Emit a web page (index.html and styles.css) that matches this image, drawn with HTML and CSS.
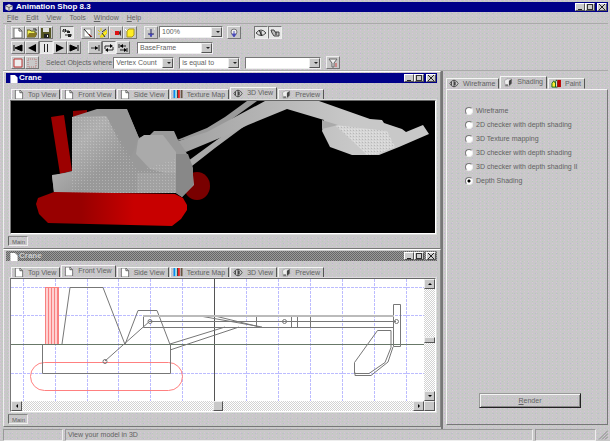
FILE: index.html
```html
<!DOCTYPE html>
<html lang="en">
<head>
<meta charset="utf-8">
<title>Animation Shop 8.3</title>
<link rel="stylesheet" href="styles.css">
</head>
<body>
<svg class="defs" aria-hidden="true">
  <symbol id="page" viewBox="0 0 10 10"><path d="M1 0h5l3 3v7H1z" fill="#fff" stroke="#555" stroke-width=".8"/><path d="M6 0v3h3" fill="none" stroke="#555"/></symbol>
  <symbol id="texture" viewBox="0 0 10 10"><path d="M0 0h2v9H0z" fill="#1188ee"/><path d="M2 0h1v9H2z" fill="#6ef"/><path d="M4 0h1v9H4z" fill="#333"/><path d="M5 0h2v9H5z" fill="#e22"/><path d="M8 0h2v9H8z" fill="#654"/></symbol>
  <symbol id="eye" viewBox="0 0 12 10"><path d="M1 5q2-4 5-4t5 4q-2 4-5 4T1 5z" fill="#ccc" stroke="#444"/><path d="M6 1v8M3 3v4" stroke="#333"/><path d="M6 3h2v4H6z" fill="#444"/></symbol>
  <symbol id="cube" viewBox="0 0 10 10"><path d="M1 3l3-2h5v5L7 9H2z" fill="#eee" stroke="#999" stroke-width=".7"/><path d="M6 3l3-2v5L6 9z" fill="#444"/><path d="M2 7h3v2H2z" fill="#777"/></symbol>
  <symbol id="paint" viewBox="0 0 11 10"><path d="M1 9V5l2-3 2 3v4z" fill="#fe3" stroke="#161"/><path d="M5 9V3l1-2 1 2v6z" fill="#fff" stroke="#151"/><path d="M7 1h4v8H7z" fill="#b00"/></symbol>
  <symbol id="tree" viewBox="0 0 10 10"><path d="M0 3h7M3 7h7" stroke="#222"/><path d="M3 1L1 3l2 2zM1 1h3v3H1zM5 3h3v2H5zM6 6h3v3H6z" fill="#222"/></symbol>
</svg>
<div class="app">
  <header class="title main-title">
    <svg class="ico" viewBox="0 0 10 10"><path d="M1 3l4-2 4 2v4L5 9 1 7z" fill="#ddd"/><path d="M5 5v4M1 3l4 2 4-2" fill="none" stroke="#555"/></svg>
    <h1>Animation Shop 8.3</h1>
    <div class="winbtns"><button class="wb min" aria-label="Minimize"></button><button class="wb max" aria-label="Restore"></button><button class="wb close" aria-label="Close"></button></div>
  </header>
  <nav class="menu"><a href="#"><u>F</u>ile</a><a href="#"><u>E</u>dit</a><a href="#"><u>V</u>iew</a><a href="#">Tools</a><a href="#"><u>W</u>indow</a><a href="#"><u>H</u>elp</a></nav>

  <div class="toolbars">
    <div class="bar">
      <div class="group">
        <button class="tb" aria-label="New"><svg viewBox="0 0 10 10"><use href="#page"/></svg></button>
        <button class="tb" aria-label="Open"><svg viewBox="0 0 10 10"><path d="M0 9V2h3l1 1h4v2h2L8 9z" fill="#ee5" stroke="#552"/><path d="M0 9l2-4h8L8 9z" fill="#872"/><path d="M6 1h3v2" fill="none" stroke="#222"/></svg></button>
        <button class="tb" aria-label="Save"><svg viewBox="0 0 10 10"><path d="M0 0h10v10H0z" fill="#552"/><path d="M2 0h6v4H2z" fill="#ddd"/><path d="M3 6h5v4H3z" fill="#222"/><path d="M6 7h1v2H6z" fill="#eee"/></svg></button>
      </div>
      <div class="group"><button class="tb on" aria-label="Hierarchy"><svg viewBox="0 0 10 10"><use href="#tree"/></svg></button></div>
      <div class="group">
        <button class="tb" aria-label="Sheet"><svg viewBox="0 0 10 10"><path d="M1 1h7v8H1z" fill="#fff" stroke="#999"/><path d="M1 1l7 8" stroke="#222"/><path d="M6 6l3 3" stroke="#a22"/></svg></button>
        <button class="tb" aria-label="Light"><svg viewBox="0 0 10 10"><path d="M1 2l2 2M4 0v3M1 6h2M3 9l3-4 4-3v3L6 9z" fill="#fe2" stroke="#dc1"/><path d="M5 4l4-3M5 5l3 4" stroke="#333"/></svg></button>
        <button class="tb" aria-label="Camera"><svg viewBox="0 0 10 10"><path d="M0 1l3 3M0 6h3" stroke="#fbb"/><path d="M4 3h4v4H4z" fill="#d11"/><path d="M8 4l2-2v6L8 6z" fill="#433"/></svg></button>
        <button class="tb" aria-label="Shape"><svg viewBox="0 0 10 10"><path d="M2 3l2-2h5v6L7 9H2z" fill="#fe2" stroke="#a92"/><path d="M0 1l2 2" stroke="#fff"/></svg></button>
      </div>
      <div class="group">
        <button class="tb" aria-label="Zoom in"><svg viewBox="0 0 10 10"><path d="M5 1v8M2 6h6" stroke="#226"/><path d="M1 1h2M8 1h1" stroke="#fff"/><path d="M3 6l2 3 2-3z" fill="#44b"/></svg></button>
        <span class="combo zoom"><select aria-label="Zoom"><option>100%</option></select></span>
        <button class="tb apart" aria-label="Zoom fit"><svg viewBox="0 0 10 10"><circle cx="5" cy="4" r="3" fill="#eee" stroke="#777"/><path d="M5 3v4M3 6l2 3 2-3z" fill="#33a" stroke="#55b"/></svg></button>
      </div>
      <div class="group far">
        <button class="tb on" aria-label="Show"><svg viewBox="0 0 10 10"><path d="M0 5q5-6 10 0-5 5-10 0z" fill="#ddd" stroke="#444"/><path d="M5 3v4M3 2l3 6" stroke="#222"/></svg></button>
        <button class="tb on" aria-label="Hide"><svg viewBox="0 0 10 10"><path d="M1 2h3l1 2h4v4H4L2 5z" fill="#bbb" stroke="#444"/><path d="M6 4v3" stroke="#222"/></svg></button>
      </div>
    </div>
    <div class="bar">
      <div class="group">
        <button class="tb" aria-label="First frame"><svg viewBox="0 0 10 10"><path d="M1 2v6M9 2v6L2 5z" fill="#000" stroke="#000"/></svg></button>
        <button class="tb" aria-label="Back"><svg viewBox="0 0 10 10"><path d="M9 1v8L1 5z"/></svg></button>
        <button class="tb on" aria-label="Pause"><svg viewBox="0 0 10 10" shape-rendering="crispEdges"><path d="M3 1h1v8H3zM6 1h1v8H6z" fill="#222"/></svg></button>
        <button class="tb" aria-label="Play"><svg viewBox="0 0 10 10"><path d="M1 1v8l8-4z"/></svg></button>
        <button class="tb" aria-label="Last frame"><svg viewBox="0 0 10 10"><path d="M9 2v6M1 2v6l7-3z" fill="#000" stroke="#000"/></svg></button>
      </div>
      <div class="group">
        <button class="tb" aria-label="Once"><svg viewBox="0 0 10 10"><path d="M1 5h7M9 2v6" stroke="#333"/><path d="M5 3l3 2-3 2z"/></svg></button>
        <button class="tb on" aria-label="Loop"><svg viewBox="0 0 10 10"><path d="M1 6V3h6M9 4v3H3" fill="none" stroke="#222"/><path d="M6 1l3 2-3 2zM4 5L1 7l3 2z"/></svg></button>
        <button class="tb" aria-label="Bounce"><svg viewBox="0 0 10 10"><path d="M1 1v4M2 3h6M2 7h6M9 5v4" stroke="#222"/><path d="M5 1L2 3l3 2zM6 5l3 2-3 2z"/></svg></button>
      </div>
      <span class="combo frame"><select aria-label="Frame"><option>BaseFrame</option></select></span>
    </div>
    <div class="bar">
      <div class="group">
        <button class="tb" aria-label="Select"><svg viewBox="0 0 10 10"><path d="M1 1h8v8H1z" fill="#eee" stroke="#b33"/></svg></button>
        <button class="tb" aria-label="Deselect"><svg viewBox="0 0 10 10"><path d="M1 1h8v8H1z" fill="none" stroke="#b77" stroke-dasharray="1 1"/></svg></button>
      </div>
      <label class="query" for="field">Select Objects where</label>
      <div class="filters">
        <span class="combo short"><select id="field"><option>Vertex Count</option></select></span>
        <span class="combo short"><select aria-label="Comparison"><option>is equal to</option></select></span>
        <span class="combo frame"><select aria-label="Value"><option></option></select></span>
        <button class="tb" aria-label="Apply filter"><svg viewBox="0 0 10 10"><path d="M1 1h8L6 5v4H4V5z" fill="#eee" stroke="#666"/><path d="M7 5h2v4H7z" fill="#c88"/></svg></button>
      </div>
    </div>
  </div>

  <div class="work">
    <main class="mdi">
      <section class="win">
        <div class="title">
          <svg class="ico" viewBox="0 0 10 10"><path d="M1 1h5l3 3v6H1z" fill="#fff"/></svg><h2>Crane</h2>
          <div class="winbtns"><button class="wb min" aria-label="Minimize"></button><button class="wb max" aria-label="Maximize"></button><button class="wb close" aria-label="Close"></button></div>
        </div>
        <div class="tabs">
          <button class="tab"><svg class="ico"><use href="#page"/></svg>Top View</button><button class="tab"><svg class="ico"><use href="#page"/></svg>Front View</button><button class="tab"><svg class="ico"><use href="#page"/></svg>Side View</button><button class="tab"><svg class="ico"><use href="#texture"/></svg>Texture Map</button><button class="tab active"><svg class="ico"><use href="#eye"/></svg>3D View</button><button class="tab"><svg class="ico"><use href="#cube"/></svg>Preview</button>
        </div>
        <div class="view dark">
          <svg class="scene" viewBox="11 101 424 132" preserveAspectRatio="xMidYMid slice" role="img" aria-label="Shaded crane">
            <defs>
              <linearGradient id="red"><stop offset=".3" stop-color="#980000"/><stop offset=".65" stop-color="#c80000"/></linearGradient>
              <linearGradient id="boom"><stop offset="0" stop-color="#a0a0a0"/><stop offset=".7" stop-color="#c8c8c8"/></linearGradient>
              <linearGradient id="cab" x2="1" y2="1"><stop offset="0" stop-color="#a2a2a2"/><stop offset=".35" stop-color="#b0b0b0"/><stop offset=".65" stop-color="#999"/></linearGradient>
              <pattern id="grain" width="3" height="3" patternUnits="userSpaceOnUse"><path d="M0 0h1v1H0z" fill="#eee"/><path d="M2 1h1v1H2z" fill="#999"/></pattern>
            </defs>
            <ellipse cx="197" cy="186" rx="13" ry="14" fill="#790000"/>
            <path d="M51 117l13-2 8 56-12 3z" fill="#9c0000"/>
            <path d="M73 111l14-1v4l-14 3z" fill="#8a0000"/>
            <path d="M188 161l37-27 25-15-4 6-31 23-23 18z" fill="#aaa"/>
            <path d="M172 142l35-14 18-11 22-16h10l-25 18-22 15z" fill="#999"/>
            <path d="M172 143l35-11 58-31h54l51 18 12 1 2 3 18 6 4 3 17-7 6 9-30 13-20 8h-27l-22-8-8-16 2-11-37-11-39 16-21 10-41 17z" fill="url(#boom)"/>
            <path d="M335 125l52 6 8 16-18 7-10 1z" fill="#d5d5d5"/>
            <path d="M335 125l52 6 8 16-18 7-10 1z" fill="url(#grain)" opacity=".5"/>
            <path d="M322 120l16 5-16 4z" fill="#aaa"/>
            <path d="M72 117l25-8 30 1 12 28 4-2 7-1 4-4h20l4 9 8 12 6 13 2 20-12 12-6-4H54l-2-17 20-5z" fill="#999"/>
            <path d="M72 117l35-1 22 45 8 31H54l-2-17 20-3z" fill="url(#cab)"/>
            <path d="M97 109h30l12 29-10 23-22-44z" fill="#979797"/>
            <path d="M138 140l6-5h19l13 17v24l-26-7-14-15z" fill="#aaa"/>
            <path d="M137 173h39v20h-39z" fill="#a2a2a2"/>
            <path d="M176 154h12l5 14v17l-11 12-6-4z" fill="#888"/>
            <path d="M72 117l35-1 31 55 38-12v34H72z" fill="url(#grain)" opacity=".28"/>
            <path d="M54 192l121 2 8 4 4 7v5l-6 9-9 7-124-3-9-9-3-10 2-6z" fill="url(#red)"/>
          </svg>
        </div>
        <div class="foot"><span class="chip">Main</span></div>
      </section>

      <section class="win idle">
        <div class="title">
          <svg class="ico" viewBox="0 0 10 10"><path d="M1 1h5l3 3v6H1z" fill="#fff"/></svg><h2>Crane</h2>
          <div class="winbtns"><button class="wb min" aria-label="Minimize"></button><button class="wb max" aria-label="Maximize"></button><button class="wb close" aria-label="Close"></button></div>
        </div>
        <div class="tabs">
          <button class="tab"><svg class="ico"><use href="#page"/></svg>Top View</button><button class="tab active"><svg class="ico"><use href="#page"/></svg>Front View</button><button class="tab"><svg class="ico"><use href="#page"/></svg>Side View</button><button class="tab"><svg class="ico"><use href="#texture"/></svg>Texture Map</button><button class="tab"><svg class="ico"><use href="#eye"/></svg>3D View</button><button class="tab"><svg class="ico"><use href="#cube"/></svg>Preview</button>
        </div>
        <div class="view scrolled">
          <svg class="scene" viewBox="11 279 413 122" preserveAspectRatio="xMidYMid slice" role="img" aria-label="Front wireframe" shape-rendering="crispEdges" fill="none">
            <path d="M23.5 279v122M55.5 279v122M87.500 279v122M118.500 279v122M150.500 279v122M182.500 279v122M246.500 279v122M278.500 279v122M310.500 279v122M342.500 279v122M374.500 279v122M406.500 279v122M11 287.500h413M11 315.500h413M11 373.500h413" stroke="#bcbcff" stroke-dasharray="3 1"/>
            <path d="M214.500 279v122" stroke="#555"/>
            <path d="M11 344.500h413" stroke="#687868"/>
            <path d="M45 287h14v57H45z" fill="#ffd0d0"/>
            <path d="M45.500 344v-57h13v57M48.500 287v57M51.500 287v57M54.500 287v57M57.500 287v57" stroke="#f88080"/>
            <rect x="30.500" y="362.500" width="152" height="28" rx="14" stroke="#ff8080" shape-rendering="auto"/>
            <g stroke="#777" shape-rendering="auto">
              <path d="M62 344l8-56.500h33l22 57 13-34h19l13 34M42.500 344.500v29h128v-29M105 361l45-40M170 344l55-17M170 350l69-23M200 316l62 11M215 316l45 11"/>
              <path d="M143.500 316v11.500H394M256.500 316v11M291.500 316v11M297.500 316v11M310.500 316v11M150 321.500h246M393.500 304.500h7v42h-7zM377.500 330.500h13.500v17l-6 15-16 11h-14.500v-11zM393 347l-5 15-17 13.500h-16v-3"/>
              <path d="M143 316h251" stroke="#bbb" stroke-width="2"/>
              <circle cx="105" cy="361.500" r="2"/><circle cx="150" cy="321.500" r="2"/><circle cx="284.500" cy="321.500" r="2"/><circle cx="396.500" cy="321.500" r="2"/>
            </g>
          </svg>
          <div class="sb vertical"><button class="sbtn up" aria-label="Scroll up"></button><span class="thumb"></span><button class="sbtn down" aria-label="Scroll down"></button></div>
          <div class="sb horizontal"><button class="sbtn left" aria-label="Scroll left"></button><span class="thumb"></span><button class="sbtn right" aria-label="Scroll right"></button></div>
          <span class="corner"></span>
        </div>
        <div class="foot"><span class="chip">Main</span></div>
      </section>
    </main>

    <aside class="side">
      <div class="tabs">
        <button class="tab"><svg class="ico"><use href="#eye"/></svg>Wireframe</button><button class="tab active"><svg class="ico"><use href="#cube"/></svg>Shading</button><button class="tab"><svg class="ico"><use href="#paint"/></svg>Paint</button>
      </div>
      <form class="panel">
        <div class="modes">
          <label><input type="radio" name="mode">Wireframe</label>
          <label><input type="radio" name="mode">2D checker with depth shading</label>
          <label><input type="radio" name="mode">3D Texture mapping</label>
          <label><input type="radio" name="mode">3D checker with depth shading</label>
          <label><input type="radio" name="mode">3D checker with depth shading II</label>
          <label><input type="radio" name="mode" checked>Depth Shading</label>
        </div>
        <button type="button" class="render"><u>R</u>ender</button>
      </form>
    </aside>
  </div>

  <footer class="status"><span></span><span>View your model in 3D</span><span></span><svg class="grip" viewBox="0 0 10 10"><path d="M1 10l9-9M4 10l6-6M7 10l3-3" stroke="#888"/></svg></footer>
</div>
</body>
</html>
```
FILE: styles.css
```css
* { box-sizing: border-box; }
body {
  margin: 0;
  font: 7px/10px "Liberation Sans", Arial, sans-serif;
  color: #626262;
}
button, select { font: inherit; color: inherit; padding: 0; border-radius: 0; }
h1, h2 { margin: 0; font-size: 8px; line-height: 10px; }
a { color: inherit; text-decoration: none; }
.defs { display: none; }

.app {
  min-height: 100vh;
  display: flex;
  flex-direction: column;
  padding: 2px 2px 0 3px;
  background-color: #c8c8c8;
  background-image:
    conic-gradient(from 270deg at 1px 1px, #d9c2db 90deg, transparent 0),
    conic-gradient(from 270deg at 1px 1px, #b9cbbb 90deg, transparent 0),
    conic-gradient(from 270deg at 1px 1px, #bdb9ce 90deg, transparent 0);
  background-size: 4px 3px, 5px 4px, 7px 5px;
  background-position: 0 0, 2px 1px, 3px 3px;
}

.title {
  display: flex;
  align-items: center;
  gap: 2px;
  height: 10px;
  padding: 0 1px 0 3px;
  background: #000088;
  color: #fff;
}
.win .title { gap: 0; }
.main-title { padding-left: 1px; }
.ico { width: 10px; height: 9px; flex: none; }
.winbtns { display: flex; margin-left: auto; }
.wb {
  position: relative;
  width: 10px;
  height: 8px;
  border: 1px solid;
  border-color: #fff #555 #555 #fff;
  background: #ccc;
}
.wb.close { margin-left: 2px; }
.wb::before { content: ""; position: absolute; }
.min::before { left: 2px; bottom: 0; width: 4px; height: 1px; background: #222; }
.max::before { inset: 0 1px; border: 1px solid #333; }
.close::before {
  inset: 0 1px;
  background:
    linear-gradient(45deg, transparent 42%, #222 42% 58%, transparent 58%),
    linear-gradient(-45deg, transparent 42%, #222 42% 58%, transparent 58%);
}

.menu { display: flex; gap: 8px; padding: 1px 4px 0; height: 11px; }

.toolbars { border-top: 1px solid #aaa; border-bottom: 1px solid #aaa; padding: 1px 0 0 2px; height: 48px; }
.bar { display: flex; align-items: center; gap: 7px; height: 15px; padding-left: 5px; border-left: 1px solid #eee; }
.group { display: flex; }
.apart { margin-left: 4px; }
.far { margin-left: 6px; }
.tb {
  width: 14px;
  height: 13px;
  display: grid;
  place-items: center;
  border: 1px solid;
  border-color: #eee #777 #777 #eee;
  background: #c8c8c8;
}
.tb svg { width: 10px; height: 10px; }
.tb.on { border-color: #777 #eee #eee #777; background: #e6e6e6; }
.combo { position: relative; display: block; height: 12px; }
.combo select {
  appearance: none;
  display: block;
  width: 100%;
  height: 100%;
  padding: 0 11px 0 2px;
  border: 1px solid;
  border-color: #777 #eee #eee #777;
  background: #fff;
}
.combo::before {
  content: "";
  position: absolute;
  inset: 1px 1px 1px auto;
  width: 9px;
  border: 1px solid;
  border-color: #eee #555 #555 #eee;
  background: #c8c8c8;
}
.combo::after {
  content: "";
  position: absolute;
  right: 3px;
  top: 5px;
  border: 2px solid transparent;
  border-top-color: #222;
}
.zoom { width: 64px; margin-left: 1px; }
.frame { width: 76px; }
.short { width: 61px; }
.filters { display: flex; gap: 5px; align-items: center; margin-left: -6px; }

.work { flex: 1; display: grid; grid-template-columns: 440px 1fr; }
.mdi { display: grid; grid-template-rows: 1fr 1fr; border-right: 2px solid #777; padding-bottom: 2px; }
.win {
  display: flex;
  flex-direction: column;
  padding: 1px 3px 2px 2px;
  border: 1px solid;
  border-color: #fff #888 #777 #eee;
}
.idle .title {
  color: #ccc;
  background: repeating-conic-gradient(#666 0 25%, #999 0 50%) 0 0 / 2px 2px;
}
.win .tabs { margin: 4px 0 0 5px; }
.tabs { display: flex; align-items: flex-end; gap: 1px; height: 13px; }
.tab {
  display: flex;
  align-items: center;
  gap: 4px;
  height: 11px;
  padding: 0 3px 0 2px;
  border: 1px solid;
  border-color: #f4f4f4 #555 transparent #f4f4f4;
  background: none;
  white-space: nowrap;
}
.tab.active { height: 13px; padding-bottom: 1px; }
.view {
  flex: 1;
  min-height: 0;
  margin: 0 1px 0 4px;
  border: 1px solid;
  border-color: #666 #fff #fff #777;
  outline: 1px solid #ddd;
}
.dark { background: #000; }
.scene { display: block; width: 100%; height: 100%; min-height: 0; }
.foot { height: 12px; padding: 2px 0 0 2px; }
.chip {
  display: block;
  width: 20px;
  height: 10px;
  padding-left: 3px;
  font-size: 6px;
  border: 1px solid;
  border-color: #888 #eee #eee #666;
}

.scrolled {
  display: grid;
  grid-template-columns: 1fr 11px;
  grid-template-rows: 1fr 10px;
  background: #fff;
}
.scrolled .scene { contain: size; }
.sb {
  display: flex;
  justify-content: space-between;
  background: repeating-conic-gradient(#fff 0 25%, #d2d2d2 0 50%) 0 0 / 2px 2px;
}
.vertical { flex-direction: column; }
.horizontal { grid-row: 2; grid-column: 1; }
.sbtn, .thumb, .corner { border: 1px solid; border-color: #eee #555 #555 #eee; background: #c8c8c8; }
.sbtn { width: 11px; height: 10px; display: grid; place-items: center; }
.sbtn::before { content: ""; border: 2px solid transparent; }
.up::before { border-bottom-color: #000; margin-top: -2px; }
.down::before { border-top-color: #000; margin-bottom: -2px; }
.left::before { border-right-color: #000; margin-left: -2px; }
.right::before { border-left-color: #000; margin-right: -2px; }
.horizontal .thumb { width: 10px; }
.vertical .thumb { height: 6px; }

.side { display: flex; flex-direction: column; padding: 5px 0 4px 3px; }
.panel {
  flex: 1;
  display: flex;
  flex-direction: column;
  justify-content: space-between;
  padding: 16px 26px 16px 18px;
  border: 1px solid;
  border-color: #f4f4f4 #777 #777 #f4f4f4;
}
.modes { display: grid; gap: 4px; }
.modes label { display: flex; align-items: center; gap: 3px; white-space: nowrap; }
.modes input {
  appearance: none;
  width: 8px;
  height: 8px;
  margin: 0;
  border: 1px solid;
  border-color: #777 #eee #eee #777;
  border-radius: 50%;
  background: #fff;
}
.modes input:checked { background: radial-gradient(circle, #000 0 1px, #fff 2px); }
.render {
  height: 15px;
  margin-left: 14px;
  border: 1px solid;
  border-color: #999 #222 #222 #999;
  background: none;
  box-shadow: inset 1px 1px #f4f4f4, inset -1px -1px #888;
}

.status { display: grid; grid-template-columns: 60px 1fr 61px 10px; gap: 2px; height: 14px; padding-bottom: 2px; }
.status span { padding-left: 2px; border: 1px solid; border-color: #999 #eee #eee #999; }
.grip { width: 10px; height: 11px; }
```
